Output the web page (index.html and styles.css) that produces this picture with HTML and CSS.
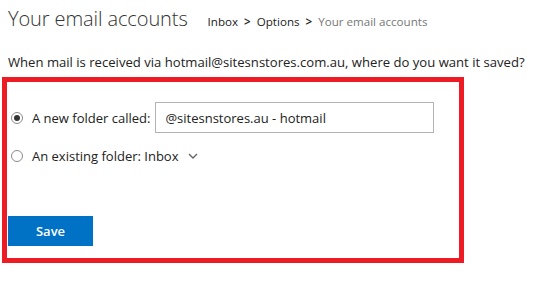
FILE: index.html
```html
<!DOCTYPE html>
<html>
<head>
<meta charset="utf-8">
<link rel="stylesheet" href="styles.css">
</head>
<body>
<div class="header">
  <h1 class="title">Your email accounts</h1>
  <nav class="crumbs">
    <span class="crumb">Inbox</span>
    <span class="sep">&gt;</span>
    <span class="crumb">Options</span>
    <span class="sep">&gt;</span>
    <span class="crumb current">Your email accounts</span>
  </nav>
</div>
<p class="question">When mail is received via hotmail@sitesnstores.com.au, where do you want it saved?</p>
<div class="panel">
  <div class="option">
    <input type="radio" name="dest" class="radio" checked>
    <label class="label">A new folder called:</label>
    <input type="text" class="field" value="@sitesnstores.au - hotmail">
  </div>
  <div class="option second">
    <input type="radio" name="dest" class="radio">
    <label class="label">An existing folder: Inbox</label>
    <svg class="chev" width="10" height="6" viewBox="0 0 10 6"><path d="M1 1 L5 5 L9 1" fill="none" stroke="#666" stroke-width="1.4"/></svg>
  </div>
  <button class="save">Save</button>
</div>
</body>
</html>
```
FILE: styles.css
```css
html, body { margin: 0; padding: 0; background: #fff; }
body {
  font-family: "Open Sans", "Noto Sans", "DejaVu Sans", sans-serif;
  color: #222;
  width: 559px;
}
.header {
  display: flex;
  align-items: baseline;
  padding: 5px 0 0 8px;
  height: 33px;
}
.title {
  margin: 0;
  font-weight: 300;
  font-size: 20px;
  color: #333;
  letter-spacing: -0.1px;
}
.crumbs {
  margin-left: 20px;
  font-size: 11.6px;
  display: flex;
  gap: 6px;
  align-items: baseline;
}
.crumb { color: #222; }
.sep { color: #222; font-weight: 600; }
.current { color: #777; }
.question {
  margin: 0;
  padding: 15px 0 0 8px;
  font-size: 13.1px;
  height: 24px;
  color: #222;
}
.panel {
  margin-left: 2px;
  width: 451px;
  border: 5px solid #ed1c24;
  padding: 20px 0 12px 1px;
  height: 144px;
  display: flex;
  flex-direction: column;
}
.option {
  display: flex;
  align-items: center;
  height: 31px;
  font-size: 13px;
  color: #222;
}
.second { margin-top: 11px; height: 24px; }
.radio {
  appearance: none;
  -webkit-appearance: none;
  margin: 0 9px 0 3px;
  width: 12px;
  height: 12px;
  border: 1px solid #8a8a8a;
  border-radius: 50%;
  box-sizing: border-box;
  position: relative;
  background: #fff;
}
.radio:checked::after {
  content: "";
  position: absolute;
  left: 2px; top: 2px;
  width: 6px; height: 6px;
  border-radius: 50%;
  background: #333;
}
.label { white-space: nowrap; }
.field {
  margin-left: 5px;
  width: 279px;
  height: 31px;
  box-sizing: border-box;
  border: 1px solid #b3b3b3;
  padding: 0 9px;
  font-family: inherit;
  font-size: 13px;
  color: #222;
  outline: none;
}
.chev { margin-left: 9px; }
.save {
  margin-top: auto;
  width: 85px;
  height: 30px;
  background: #0072c6;
  color: #fff;
  border: none;
  font-family: inherit;
  font-size: 13px;
  font-weight: 600;
  padding: 0;
}
```
